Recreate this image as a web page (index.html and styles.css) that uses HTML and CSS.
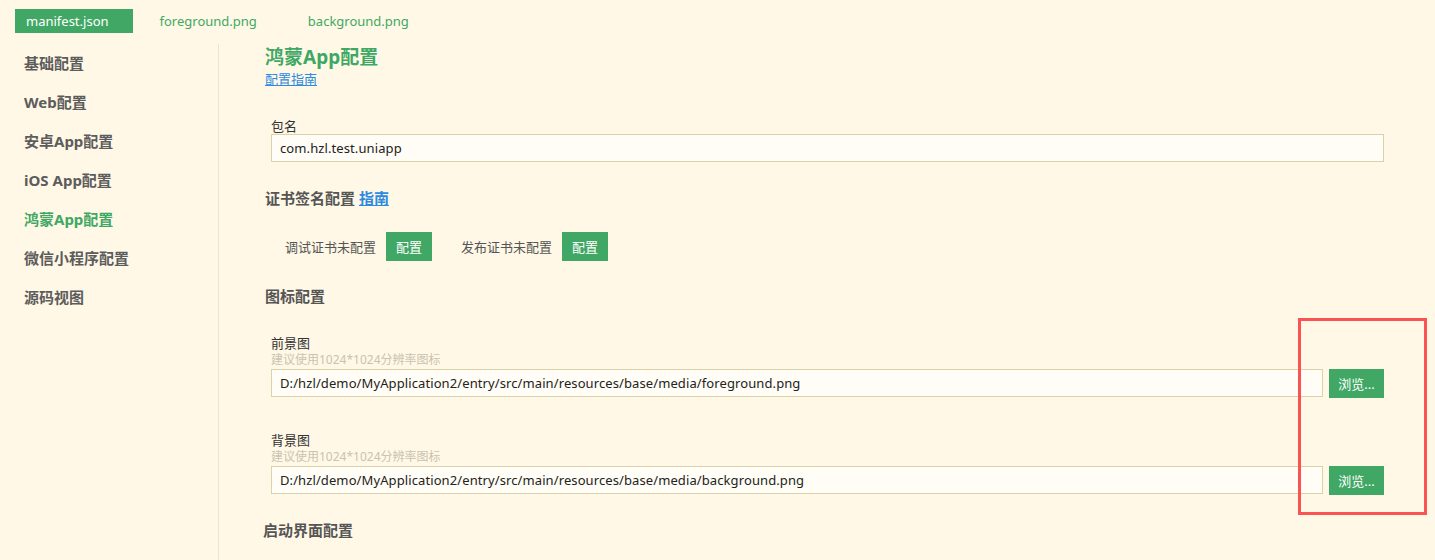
FILE: index.html
```html
<!DOCTYPE html>
<html lang="zh-CN">
<head>
<meta charset="utf-8">
<title>manifest.json</title>
<link rel="stylesheet" href="styles.css">
</head>
<body>
<div class="tabbar">
  <span class="tab active">manifest.json</span>
  <span class="tab">foreground.png</span>
  <span class="tab">background.png</span>
</div>
<div class="layout">
  <nav class="sidebar">
    <div class="nav-item">基础配置</div>
    <div class="nav-item">Web配置</div>
    <div class="nav-item">安卓App配置</div>
    <div class="nav-item">iOS App配置</div>
    <div class="nav-item active">鸿蒙App配置</div>
    <div class="nav-item">微信小程序配置</div>
    <div class="nav-item">源码视图</div>
  </nav>
  <main class="main">
    <h1 class="title">鸿蒙App配置</h1>
    <a class="guide" href="#">配置指南</a>

    <div class="field field-pkg">
      <div class="label">包名</div>
      <div class="input">com.hzl.test.uniapp</div>
    </div>

    <h2 class="section section-cert">证书签名配置 <a class="section-link" href="#">指南</a></h2>

    <div class="cert-row">
      <span class="cert-text">调试证书未配置</span>
      <span class="btn">配置</span>
      <span class="cert-text cert-second">发布证书未配置</span>
      <span class="btn">配置</span>
    </div>

    <h2 class="section section-icon">图标配置</h2>

    <div class="field field-fg">
      <div class="label">前景图</div>
      <div class="hint">建议使用1024*1024分辨率图标</div>
      <div class="file-row">
        <div class="input">D:/hzl/demo/MyApplication2/entry/src/main/resources/base/media/foreground.png</div>
        <span class="btn btn-browse">浏览...</span>
      </div>
    </div>

    <div class="field field-bg">
      <div class="label">背景图</div>
      <div class="hint">建议使用1024*1024分辨率图标</div>
      <div class="file-row">
        <div class="input">D:/hzl/demo/MyApplication2/entry/src/main/resources/base/media/background.png</div>
        <span class="btn btn-browse">浏览...</span>
      </div>
    </div>

    <h2 class="section section-splash">启动界面配置</h2>
  </main>
</div>
<div class="annotation"></div>
</body>
</html>
```

FILE: styles.css
```css
* { box-sizing: border-box; }

html, body {
  margin: 0;
  padding: 0;
  height: 560px;
  overflow: hidden;
  background: #fff8e6;
}

body {
  font-family: "Noto Sans", "Noto Sans CJK SC", sans-serif;
  color: #333;
  font-size: 13px;
  position: relative;
}

.tabbar {
  height: 44px;
  padding: 9px 0 0 15px;
  display: flex;
  align-items: flex-start;
}

.tab {
  height: 24px;
  line-height: 24px;
  padding: 0 24px 0 11px;
  margin-right: 16px;
  font-size: 13px;
  color: #3ea864;
}

.tab.active {
  background: #40a864;
  color: #fff;
}

.layout {
  display: flex;
  height: 516px;
}

.sidebar {
  width: 219px;
  flex: none;
  border-right: 1px solid #efe5c6;
}

.nav-item {
  height: 39px;
  line-height: 38px;
  padding-left: 24px;
  font-size: 15px;
  font-weight: bold;
  color: #5c5c5c;
}

.nav-item.active { color: #3ea864; }

.main {
  flex: 1;
  padding: 0 51px 0 46px;
  overflow: hidden;
}

.title {
  margin: 0;
  font-size: 19px;
  line-height: 26px;
  font-weight: bold;
  color: #3ea864;
}

.guide {
  display: block;
  width: max-content;
  font-size: 13px;
  line-height: 18px;
  color: #2d8ae3;
  text-decoration: underline;
}

.field { padding-left: 6px; }

.field-pkg { margin-top: 30px; }
.field-fg { margin-top: 29px; }
.field-bg { margin-top: 34px; }

.label {
  font-size: 13px;
  line-height: 16px;
  color: #333;
}

.hint {
  font-size: 12px;
  line-height: 18px;
  color: #c9c3b0;
}

.input {
  height: 28px;
  line-height: 26px;
  border: 1px solid #dbd2a9;
  background: #fffdf5;
  padding: 0 8px;
  font-size: 13px;
  letter-spacing: 0.1px;
  color: #222;
  white-space: nowrap;
  overflow: hidden;
}

.file-row {
  display: flex;
  gap: 6px;
}

.file-row .input { flex: 1; }

.section {
  margin: 0;
  font-size: 15px;
  line-height: 20px;
  font-weight: bold;
  color: #555;
}

.section-cert { margin-top: 26px; }
.section-icon { margin-top: 25px; }
.section-splash { margin-top: 25px; margin-left: -2px; }

.section-link {
  color: #2d8ae3;
  text-decoration: underline;
}

.cert-row {
  margin-top: 24px;
  padding-left: 20px;
  display: flex;
  align-items: center;
}

.cert-text {
  font-size: 13px;
  color: #555;
  margin-right: 10px;
}

.cert-second { margin-left: 29px; }

.btn {
  display: inline-flex;
  align-items: center;
  justify-content: center;
  height: 29px;
  width: 46px;
  background: #40a864;
  color: #fff;
  font-size: 13px;
}

.btn-browse {
  width: 55px;
  flex: none;
}

.annotation {
  position: absolute;
  left: 1298px;
  top: 318px;
  width: 129px;
  height: 197px;
  border: 3px solid #fb5252;
}
```
